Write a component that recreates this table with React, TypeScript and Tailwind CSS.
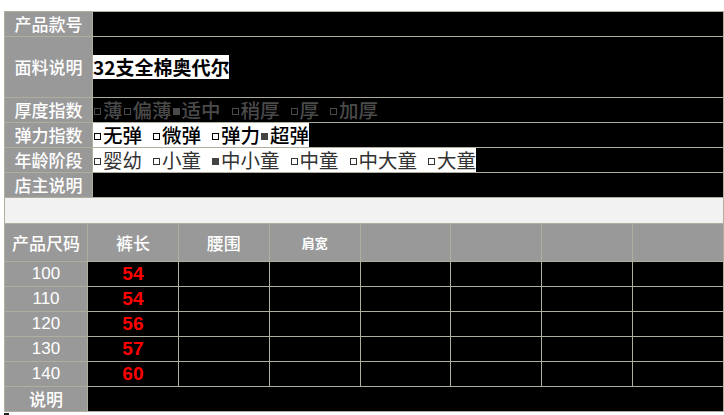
import React from "react";

type Opt = { label: string; checked?: boolean; gap?: boolean };

const thickness: Opt[] = [
  { label: "薄" },
  { label: "偏薄" },
  { label: "适中", checked: true },
  { label: "稍厚", gap: true },
  { label: "厚", gap: true },
  { label: "加厚", gap: true },
];

const elastic: Opt[] = [
  { label: "无弹" },
  { label: "微弹", gap: true },
  { label: "弹力", gap: true },
  { label: "超弹", checked: true },
];

const ages: Opt[] = [
  { label: "婴幼" },
  { label: "小童", gap: true },
  { label: "中小童", gap: true, checked: true },
  { label: "中童", gap: true },
  { label: "中大童", gap: true },
  { label: "大童", gap: true },
];

const sizes = [
  { size: "100", len: "54" },
  { size: "110", len: "54" },
  { size: "120", len: "56" },
  { size: "130", len: "57" },
  { size: "140", len: "60" },
];

function Options({
  items,
  className,
  boxClass,
  fillClass,
}: {
  items: Opt[];
  className: string;
  boxClass: string;
  fillClass: string;
}) {
  return (
    <span className={`inline-flex h-[24px] items-center text-[19.5px] leading-[24px] ${className}`}>
      {items.map((o) => (
        <span key={o.label} className="inline-flex items-center">
          {o.gap && <span className="inline-block w-[10px]" />}
          <span
            className={`ml-[1px] mr-[2px] inline-block h-[7px] w-[7px] translate-y-[1px] ${
              o.checked ? fillClass : boxClass
            }`}
          />
          {o.label}
        </span>
      ))}
    </span>
  );
}

function InfoRow({
  label,
  h,
  children,
}: {
  label: string;
  h: string;
  children?: React.ReactNode;
}) {
  return (
    <div className={`flex border-b border-[#b0ae9c] ${h}`}>
      <div className="flex w-[88px] shrink-0 items-center justify-center border-r border-[#b0ae9c] bg-[#999999] text-[17px] font-medium text-white">
        {label}
      </div>
      <div className="flex flex-1 items-center bg-black">{children}</div>
    </div>
  );
}

export default function App() {
  return (
    <div className="h-[415px] w-[724px] bg-white pl-[4px] pt-[11px] font-['Noto_Sans_CJK_SC',sans-serif]">
      <div className="w-[720px] border-x border-t border-[#b0ae9c]">
        <InfoRow label="产品款号" h="h-[25px]" />
        <InfoRow label="面料说明" h="h-[61px]">
          <span className="bg-white text-[19px] font-bold leading-[24px] text-black">32支全棉奥代尔</span>
        </InfoRow>
        <InfoRow label="厚度指数" h="h-[25px]">
          <Options
            items={thickness}
            className="font-medium text-[#4a4a4a]"
            boxClass="border border-[#4a4a4a]"
            fillClass="bg-[#4a4a4a]"
          />
        </InfoRow>
        <InfoRow label="弹力指数" h="h-[25px]">
          <Options
            items={elastic}
            className="bg-white font-medium text-black"
            boxClass="border border-black"
            fillClass="bg-[#444]"
          />
        </InfoRow>
        <InfoRow label="年龄阶段" h="h-[25px]">
          <Options
            items={ages}
            className="bg-white text-[#333]"
            boxClass="border border-[#333]"
            fillClass="bg-[#444]"
          />
        </InfoRow>
        <InfoRow label="店主说明" h="h-[25px]" />

        <div className="h-[26px] border-b border-[#b0ae9c] bg-[#f2f2f2]" />

        {/* size table header */}
        <div className="flex h-[38px] border-b border-[#b0ae9c] bg-[#999999] font-medium text-white">
          <div className="flex w-[83px] shrink-0 items-center justify-center border-r border-[#b0ae9c] text-[17px]">
            产品尺码
          </div>
          <div className="flex flex-1 items-center justify-center border-r border-[#b0ae9c] text-[17px]">裤长</div>
          <div className="flex flex-1 items-center justify-center border-r border-[#b0ae9c] text-[17px]">腰围</div>
          <div className="flex flex-1 items-center justify-center border-r border-[#b0ae9c] text-[13px] font-bold">肩宽</div>
          <div className="flex-1 border-r border-[#b0ae9c]" />
          <div className="flex-1 border-r border-[#b0ae9c]" />
          <div className="flex-1 border-r border-[#b0ae9c]" />
          <div className="flex-1" />
        </div>

        {sizes.map((s) => (
          <div key={s.size} className="flex h-[25px] border-b border-[#b0ae9c] bg-black">
            <div className="flex w-[83px] shrink-0 items-center justify-center border-r border-[#b0ae9c] bg-[#999999] font-['Liberation_Sans',sans-serif] text-[17px] text-white">
              {s.size}
            </div>
            <div className="flex flex-1 items-center justify-center border-r border-[#b0ae9c] font-['Liberation_Sans',sans-serif] text-[19px] font-bold text-[#ff0000]">
              {s.len}
            </div>
            <div className="flex-1 border-r border-[#b0ae9c]" />
            <div className="flex-1 border-r border-[#b0ae9c]" />
            <div className="flex-1 border-r border-[#b0ae9c]" />
            <div className="flex-1 border-r border-[#b0ae9c]" />
            <div className="flex-1 border-r border-[#b0ae9c]" />
            <div className="flex-1" />
          </div>
        ))}

        <div className="flex h-[25px] border-b border-[#b0ae9c] bg-black">
          <div className="flex w-[83px] shrink-0 items-center justify-center border-r border-[#b0ae9c] bg-[#999999] text-[17px] font-medium text-white">
            说明
          </div>
          <div className="flex-1" />
        </div>
      </div>
      <div className="mt-[1px] h-[2px] w-[5px] bg-[#222]" />
    </div>
  );
}
